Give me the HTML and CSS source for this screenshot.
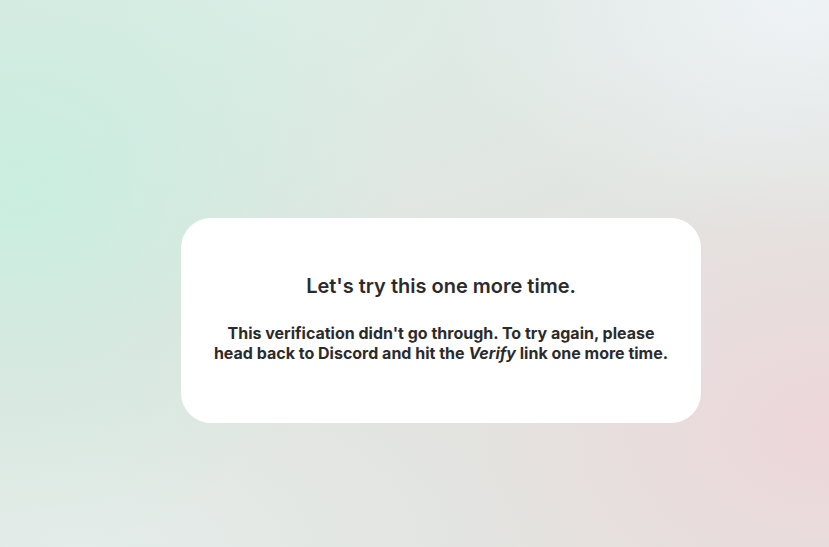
FILE: index.html
```html
<!DOCTYPE html>
<html>
<head>
	<meta charset="utf-8" />
	<title>Verification failed</title>
	<link rel="stylesheet" href="styles.css">
</head>
<body>
<div class="page">
	<div class="card">
		<h1>Let's try this one more time.</h1>
		<p>This verification didn't go through. To try again, please head back to Discord and hit the <em>Verify</em> link one more time.</p>
	</div>
</div>
</body>
</html>
```
FILE: styles.css
```css
html, body{
	margin: 0;
	padding: 0;
	height: 100%;
}
body{
	font-family: Inter, "Noto Sans", Arial, sans-serif;
	color: #2b2b2b;
	background-color: #e3e3e0;
	background-image:
		radial-gradient(ellipse 380px 360px at 20px 190px, rgba(200, 238, 224, 0.95), rgba(200, 238, 224, 0) 100%),
		radial-gradient(ellipse 360px 260px at 829px 430px, rgba(238, 214, 217, 0.95), rgba(238, 214, 217, 0) 100%),
		radial-gradient(ellipse 360px 240px at 800px 0px, rgba(238, 243, 246, 1), rgba(238, 243, 246, 0) 100%),
		radial-gradient(ellipse 620px 330px at 250px 0px, rgba(220, 238, 231, 0.95), rgba(220, 238, 231, 0) 100%),
		radial-gradient(ellipse 450px 220px at 80px 547px, rgba(228, 237, 234, 0.95), rgba(228, 237, 234, 0) 100%);
}
/* conteneur */
.page{
	padding: 218px 0 0 181px;
}
.card{
	box-sizing: border-box;
	width: 520px;
	height: 205px;
	padding: 56px 28px 0 28px;
	background-color: #fff;
	border-radius: 30px;
	text-align: center;
}
.card h1{
	margin: 0 0 25px 0;
	font-size: 20px;
	line-height: 24px;
	font-weight: 600;
}
.card p{
	margin: 0;
	font-size: 16px;
	line-height: 20px;
	font-weight: 700;
}
```
